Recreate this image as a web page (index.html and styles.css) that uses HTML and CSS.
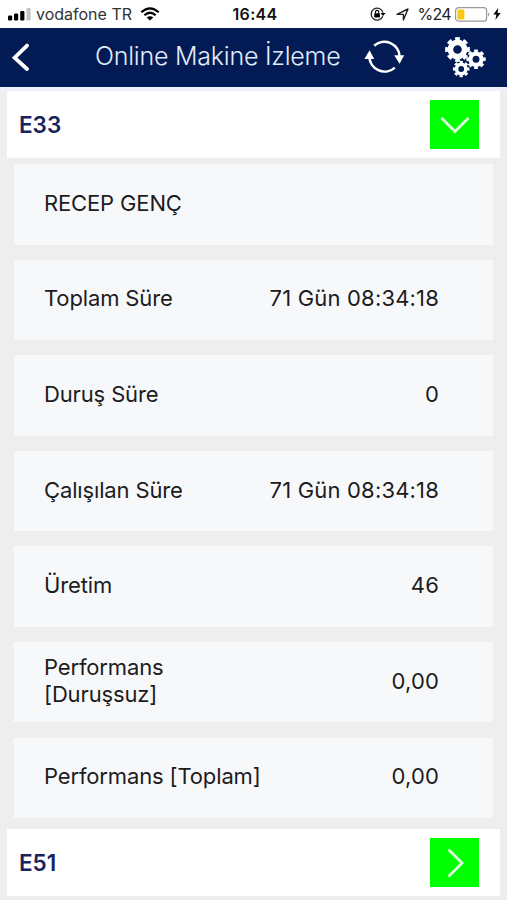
FILE: index.html
```html
<!DOCTYPE html>
<html lang="tr">
<head>
    <meta charset="UTF-8">
    <meta name="viewport" content="width=device-width, initial-scale=1.0">
    <title>Online Makine İzleme</title>
    <link rel="stylesheet" href="styles.css">
</head>
<body>
    <div class="status-bar">
        <div class="status-left">
            <svg class="signal" width="23" height="13" viewBox="0 0 23 13">
                <rect x="0" y="7.5" width="4.2" height="5" rx="1.2"/>
                <rect x="6" y="5.5" width="4.2" height="7" rx="1.2"/>
                <rect x="12.2" y="3" width="4.2" height="9.5" rx="1.2"/>
                <rect x="18.5" y="0" width="4.2" height="12.5" rx="1.2" fill="#c4c4c4"/>
            </svg>
            <span class="carrier">vodafone TR</span>
            <svg class="wifi" width="20" height="14" viewBox="0 0 20 14">
                <path d="M1.3 5.2 Q10 -2.6 18.7 5.2 M4.4 8.3 Q10 3.2 15.6 8.3" fill="none" stroke="#000" stroke-width="2.2"/>
                <path d="M6.7 10.6 Q10 7.8 13.3 10.6 L10 13.6 Z"/>
            </svg>
        </div>
        <div class="clock">16:44</div>
        <div class="status-right">
            <svg width="16" height="14" viewBox="0 0 16 14">
                <path d="M12.8 9.2 A6 6 0 1 1 13 5.6" fill="none" stroke="#222" stroke-width="1.3"/>
                <path d="M10.6 6 H15.6 L13 9 Z"/>
                <rect x="4.3" y="6.3" width="5.6" height="4.2" rx=".5"/>
                <path d="M5.5 6.5 V5 a1.6 1.6 0 0 1 3.2 0 V6.5" fill="none" stroke="#000" stroke-width="1.1"/>
            </svg>
            <svg class="location" width="13" height="13" viewBox="0 0 13 13">
                <path d="M1 6.4 L12 1 L7.4 12 V6.4 Z" fill="none" stroke="#222" stroke-width="1.4" stroke-linejoin="round"/>
            </svg>
            <span class="percent">%24</span>
            <svg class="battery" width="36" height="15" viewBox="0 0 36 15">
                <rect x=".6" y=".6" width="31" height="13.6" rx="3" fill="#fff" stroke="#999" stroke-width="1.2"/>
                <rect x="2.4" y="2.4" width="7" height="10" rx="1" fill="#f8c916"/>
                <path d="M33.2 5.2 q2 2.2 0 4.4 Z" fill="#888"/>
            </svg>
            <svg class="bolt" width="8" height="12" viewBox="0 0 8 12">
                <path d="M5.2 0 L.4 6.6 H3.4 L2.4 12 L7.6 4.9 H4.6 Z"/>
            </svg>
        </div>
    </div>

    <header class="navbar">
        <svg class="back" width="18" height="30" viewBox="0 0 18 30">
            <path d="M16 2.6 L3.6 14.6 L16 26" fill="none" stroke="#fff" stroke-width="3.8" stroke-linecap="round" stroke-linejoin="miter"/>
        </svg>
        <h1>Online Makine İzleme</h1>
        <svg class="refresh" width="42" height="36" viewBox="0 0 42 36">
            <g fill="none" stroke="#fff" stroke-width="2.6">
                <path d="M10.2 6.8 A15.2 15.2 0 0 1 35.6 18"/>
                <path d="M30.8 28.6 A15.2 15.2 0 0 1 5.4 17"/>
            </g>
            <path d="M30.2 16.2 H40.2 L35.6 24.8 Z" fill="#fff"/>
            <path d="M.4 20 H10.2 L5.6 11.2 Z" fill="#fff"/>
        </svg>
        <svg class="gears" width="42" height="42" viewBox="0 0 42 42" fill="none" stroke="#fff">
            <circle cx="13.5" cy="13.5" r="7.1" stroke-width="5.6"/>
            <circle cx="13.5" cy="13.5" r="10.8" stroke-width="3.2" pathLength="16" stroke-dasharray="1.15 .85" stroke-dashoffset=".575"/>
            <circle cx="32" cy="23.2" r="5.6" stroke-width="4.2"/>
            <circle cx="32" cy="23.2" r="8.4" stroke-width="2.6" pathLength="16" stroke-dasharray="1.15 .85" stroke-dashoffset=".575"/>
            <circle cx="17.2" cy="33" r="4.7" stroke-width="3.6"/>
            <circle cx="17.2" cy="33" r="7.1" stroke-width="2.4" pathLength="16" stroke-dasharray="1.15 .85" stroke-dashoffset=".575"/>
        </svg>
    </header>

    <main class="machines">
        <div class="machine">
            <h2>E33</h2>
            <button class="toggle">
                <svg width="30" height="30" viewBox="0 0 30 30"><path d="M1.5 8 L15 21.5 L28.5 8"/></svg>
            </button>
        </div>

        <div class="details">
            <div class="row"><span>RECEP GENÇ</span></div>
            <div class="row"><span>Toplam Süre</span><span class="value">71 Gün 08:34:18</span></div>
            <div class="row"><span>Duruş Süre</span><span class="value">0</span></div>
            <div class="row"><span>Çalışılan Süre</span><span class="value">71 Gün 08:34:18</span></div>
            <div class="row"><span>Üretim</span><span class="value">46</span></div>
            <div class="row"><span>Performans<br>[Duruşsuz]</span><span class="value">0,00</span></div>
            <div class="row"><span>Performans [Toplam]</span><span class="value">0,00</span></div>
        </div>

        <div class="machine">
            <h2>E51</h2>
            <button class="toggle">
                <svg width="30" height="30" viewBox="0 0 30 30"><path d="M8.5 1.5 L22 15 L8.5 28.5"/></svg>
            </button>
        </div>
    </main>
</body>
</html>
```
FILE: styles.css
```css
* {
    box-sizing: border-box;
}

body {
    margin: 0;
    height: 900px;
    overflow: hidden;
    background: #eeeeee;
    color: #1c1c1e;
    font-family: Inter, "Liberation Sans", sans-serif;
}

svg {
    display: block;
    flex: none;
}

.status-bar {
    display: grid;
    grid-template-columns: 1fr auto 1fr;
    align-items: center;
    height: 28px;
    padding: 0 6px 0 8px;
    background: #fff;
    font-size: 16px;
}

.status-left,
.status-right {
    display: flex;
    align-items: center;
    white-space: nowrap;
}

.status-right {
    justify-content: flex-end;
}

.carrier {
    margin: 0 8px 0 5px;
    color: #333;
}

.clock {
    padding-left: 1px;
    font-weight: 600;
    letter-spacing: 0.3px;
    color: #111;
}

.location {
    margin-left: 10px;
}

.percent {
    margin: 0 4px 0 9px;
    letter-spacing: -0.7px;
    color: #222;
}

.bolt {
    margin-left: 2px;
}

.navbar {
    display: flex;
    align-items: center;
    height: 59px;
    padding: 0 21px 0 11px;
    background: #021b54;
}

.navbar h1 {
    margin: 0 0 3px 66px;
    width: 246px;
    color: #e4ebfa;
    font-size: 25px;
    font-weight: 300;
    letter-spacing: -0.22px;
    white-space: nowrap;
}

.refresh {
    margin: 0 0 2px 23px;
}

.gears {
    margin-left: auto;
    margin-bottom: 2px;
}

.machines {
    border-top: 4px solid #f0f0f8;
    padding: 0 7px;
}

.machine {
    display: flex;
    align-items: center;
    justify-content: space-between;
    height: 67px;
    padding: 0 21px 0 12px;
    background: #fff;
}

.machine h2 {
    margin: 0;
    color: #17245c;
    font-size: 22.5px;
    font-weight: 600;
}

.toggle {
    display: flex;
    align-items: center;
    justify-content: center;
    width: 49px;
    height: 49px;
    padding: 0;
    border: none;
    background: #00ff00;
}

.toggle path {
    fill: none;
    stroke: #e0ffe0;
    stroke-width: 2.8;
}

.details {
    display: flex;
    flex-direction: column;
    gap: 15.1px;
    padding: 6px 7px 11px;
}

.row {
    display: flex;
    align-items: center;
    justify-content: space-between;
    height: 80.5px;
    padding: 0 54px 2px 30px;
    background: #f7f8fa;
    font-size: 22px;
    line-height: 27px;
    letter-spacing: -0.14px;
}

.value {
    letter-spacing: 0.18px;
}
```
